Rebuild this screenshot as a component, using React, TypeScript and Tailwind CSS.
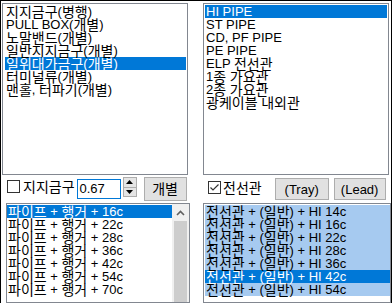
import React from "react";

const leftTop = [
  "지지금구(병행)",
  "PULL BOX(개별)",
  "노말밴드(개별)",
  "일반지지금구(개별)",
  "일위대가금구(개별)",
  "터미널류(개별)",
  "맨홀, 터파기(개별)",
];
const rightTop = [
  "HI PIPE",
  "ST PIPE",
  "CD, PF PIPE",
  "PE PIPE",
  "ELP 전선관",
  "1종 가요관",
  "2종 가요관",
  "광케이블 내외관",
];
const leftBottom = ["16c", "22c", "28c", "36c", "42c", "54c", "70c"].map(
  (s) => `파이프 + 행거 + ${s}`
);
const rightBottom = ["14c", "16c", "22c", "28c", "36c", "42c", "54c"].map(
  (s) => `전선관 + (일반) + HI ${s}`
);

function K({ text }: { text: string }) {
  const parts = text.split(/([\uAC00-\uD7A3]+)/);
  return (
    <>
      {parts.map((p, i) =>
        /[\uAC00-\uD7A3]/.test(p) ? (
          <span key={i} className="text-[14px] leading-[13px] align-[-1px]">
            {p}
          </span>
        ) : (
          <React.Fragment key={i}>{p}</React.Fragment>
        )
      )}
    </>
  );
}

function Row({ text, cls }: { text: string; cls: string }) {
  return (
    <div className={"h-[13px] leading-[13px] whitespace-nowrap pl-[1px] overflow-visible " + cls}>
      <K text={text} />
    </div>
  );
}

export default function App() {
  return (
    <div className="w-[392px] h-[303px] overflow-hidden bg-white border-l border-t border-r border-black text-[13px] leading-[13px] text-black [font-family:'Liberation_Sans','Noto_Sans_CJK_KR',sans-serif] flex pl-[1px] pt-[2px]">
      {/* left column */}
      <div className="w-[186px] flex flex-col shrink-0">
        <div className="h-[178px] border border-[#828790] pt-[1px] pl-[2px] pr-[1px]">
          {leftTop.map((t, i) => (
            <Row key={t} text={t} cls={i === 4 ? "bg-[#0078d7] text-white" : ""} />
          ))}
        </div>
        <div className="h-[29px] flex items-start">
          <div className="ml-[5px] mt-[5px] w-[13px] h-[13px] border border-[#333333] bg-white shrink-0" />
          <div className="ml-[3px] mt-[5px] h-[13px] leading-[13px] whitespace-nowrap">
            <K text="지지금구" />
          </div>
          <div className="ml-[2px] mt-[4px] w-[44px] h-[20px] border border-[#0078d7] bg-white pl-[2px] leading-[18px] shrink-0">
            0.67
          </div>
          <div className="ml-[2px] mt-[2px] w-[14px] h-[20px] border border-[#adadad] bg-[#e5e5e5] flex flex-col shrink-0">
            <div className="flex-1 flex items-center justify-center border-b border-[#adadad]">
              <svg width="7" height="4" viewBox="0 0 7 4">
                <polygon points="3.5,0 7,4 0,4" fill="#000" />
              </svg>
            </div>
            <div className="flex-1 flex items-center justify-center">
              <svg width="7" height="4" viewBox="0 0 7 4">
                <polygon points="0,0 7,0 3.5,4" fill="#000" />
              </svg>
            </div>
          </div>
          <div className="ml-[7px] mt-[2px] w-[43px] h-[24px] border border-[#adadad] bg-[#e1e1e1] flex items-center justify-center shrink-0">
            <K text="개별" />
          </div>
        </div>
        <div className="ml-[4px] w-[184px] h-[100px] border border-[#828790] flex shrink-0">
          <div className="flex-1 pt-[1px] min-w-0">
            {leftBottom.map((t, i) => (
              <Row key={t} text={t} cls={i === 0 ? "bg-[#0078d7] text-white" : ""} />
            ))}
          </div>
          <div className="w-[17px] bg-[#f0f0f0] flex flex-col shrink-0">
            <div className="h-[17px] flex items-center justify-center">
              <svg width="9" height="6" viewBox="0 0 9 6">
                <polyline points="1,5 4.5,1.5 8,5" fill="none" stroke="#606060" strokeWidth="1.6" />
              </svg>
            </div>
            <div className="flex-1 mx-[2px] bg-[#cdcdcd]" />
          </div>
        </div>
      </div>

      {/* right column */}
      <div className="ml-[15px] w-[186px] flex flex-col shrink-0">
        <div className="h-[178px] border border-[#828790] pt-[1px] pl-[1px] pr-[1px]">
          {rightTop.map((t, i) => (
            <Row key={t} text={t} cls={i === 0 ? "bg-[#0078d7] text-white" : ""} />
          ))}
        </div>
        <div className="h-[29px] flex items-start">
          <div className="ml-[5px] mt-[6px] w-[13px] h-[13px] border border-[#333333] bg-white flex items-center justify-center shrink-0">
            <svg width="11" height="11" viewBox="0 0 11 11">
              <polyline points="1.5,5.5 4,8 9.5,2.5" fill="none" stroke="#333" strokeWidth="1.2" />
            </svg>
          </div>
          <div className="ml-[2px] mt-[6px] h-[13px] leading-[13px] whitespace-nowrap">
            <K text="전선관" />
          </div>
          <div className="ml-[13px] mt-[3px] w-[54px] h-[22px] border border-[#adadad] bg-[#e1e1e1] flex items-center justify-center shrink-0">
            (Tray)
          </div>
          <div className="ml-[5px] mt-[3px] w-[52px] h-[22px] border border-[#adadad] bg-[#e1e1e1] flex items-center justify-center shrink-0">
            (Lead)
          </div>
        </div>
        <div className="w-[188px] h-[100px] border border-[#828790] pt-[1px] pl-[1px] shrink-0">
          {rightBottom.map((t, i) => (
            <Row key={t} text={t} cls={i === 5 ? "bg-[#0078d7] text-white" : "bg-[#a6caf0]"} />
          ))}
        </div>
      </div>
    </div>
  );
}
